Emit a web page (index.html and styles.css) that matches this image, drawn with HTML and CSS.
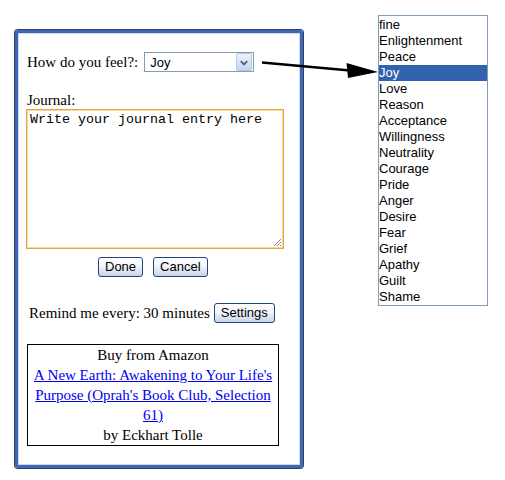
FILE: index.html
```html
<!DOCTYPE html>
<html>
<head>
<meta charset="utf-8">
<link rel="stylesheet" href="styles.css">
</head>
<body>
<div class="stage">
  <div class="frame">
    <div class="feel-row">
      <span class="label">How do you feel?:</span>
      <div class="select">
        <span class="select-value">Joy</span>
        <span class="drop">
          <svg width="15" height="17" viewBox="0 0 15 17"><path d="M4 7 L7.5 10.5 L11 7" fill="none" stroke="#4d6185" stroke-width="2"/></svg>
        </span>
      </div>
    </div>
    <div class="journal-label">Journal:</div>
    <div class="textarea">Write your journal entry here<svg class="grip" width="11" height="11" viewBox="0 0 11 11"><path d="M10 3 L3 10 M10 6 L6 10 M10 9 L9 10" stroke="#888" stroke-width="1"/></svg></div>
    <div class="actions">
      <button class="btn">Done</button>
      <button class="btn">Cancel</button>
    </div>
    <div class="remind-row">
      <span>Remind me every: 30 minutes</span>
      <button class="btn">Settings</button>
    </div>
    <div class="amazon">
      <div>Buy from Amazon</div>
      <a href="#" class="book-link">A New Earth: Awakening to Your Life's Purpose (Oprah's Book Club, Selection 61)</a>
      <div>by Eckhart Tolle</div>
    </div>
  </div>
  <ul class="listbox">
    <li>fine</li>
    <li>Enlightenment</li>
    <li>Peace</li>
    <li class="selected">Joy</li>
    <li>Love</li>
    <li>Reason</li>
    <li>Acceptance</li>
    <li>Willingness</li>
    <li>Neutrality</li>
    <li>Courage</li>
    <li>Pride</li>
    <li>Anger</li>
    <li>Desire</li>
    <li>Fear</li>
    <li>Grief</li>
    <li>Apathy</li>
    <li>Guilt</li>
    <li>Shame</li>
  </ul>
  <svg class="arrow" width="505" height="480" viewBox="0 0 505 480">
    <line x1="262" y1="62.5" x2="350" y2="70.5" stroke="#000" stroke-width="2.7"/>
    <polygon points="346.5,63 378,72 348,78" fill="#000"/>
  </svg>
</div>
</body>
</html>
```

FILE: styles.css
```css
html, body {
  margin: 0;
  padding: 0;
  background: #ffffff;
}

.stage {
  position: relative;
  width: 505px;
  height: 480px;
  box-sizing: border-box;
  padding: 15px 0 0 15px;
  display: flex;
  align-items: flex-start;
  font-family: "Liberation Serif", "Times New Roman", serif;
  font-size: 15px;
  color: #000;
}

.frame {
  box-sizing: border-box;
  width: 288px;
  height: 438px;
  margin-top: 15px;
  border: 3px solid #3b68be;
  border-radius: 3px;
  box-shadow: 0 0 0 1px #3a3f4a, inset 0 0 0 1px #d3d9e4;
  padding: 19px 0 0 8px;
  display: flex;
  flex-direction: column;
  align-items: flex-start;
}

.feel-row {
  display: flex;
  align-items: center;
  height: 20px;
  padding-left: 1px;
  gap: 6px;
  line-height: 17px;
}

.select {
  box-sizing: border-box;
  width: 110px;
  height: 20px;
  border: 1px solid #7f9db9;
  display: flex;
  align-items: center;
  justify-content: space-between;
  padding: 0 1px 0 5px;
  font-family: "Liberation Sans", Arial, sans-serif;
  font-size: 13px;
  background: #fff;
}

.drop {
  box-sizing: border-box;
  width: 16px;
  height: 18px;
  border: 1px solid #b4c6e6;
  border-radius: 2px;
  background: linear-gradient(#eef3fc, #c3d3f0);
  display: flex;
  align-items: center;
  justify-content: center;
}

.journal-label {
  margin-top: 20px;
  line-height: 17px;
  padding-left: 1px;
}

.textarea {
  position: relative;
  box-sizing: border-box;
  width: 258px;
  height: 140px;
  border: 1px solid #e0a843;
  box-shadow: inset 0 0 0 1px #f4d89c;
  padding: 2px 3px;
  font-family: "Liberation Mono", "Courier New", monospace;
  font-size: 13.33px;
  line-height: 15px;
  background: #fff;
}

.grip {
  position: absolute;
  right: 1px;
  bottom: 1px;
}

.actions {
  display: flex;
  gap: 10px;
  margin-top: 8px;
  padding-left: 72px;
}

.btn {
  box-sizing: border-box;
  height: 20px;
  margin: 0;
  padding: 0 6px;
  border: 1px solid #22457f;
  border-radius: 3px;
  background: linear-gradient(#ffffff 0%, #f2f5fa 45%, #c7d3e6 100%);
  font-family: "Liberation Sans", Arial, sans-serif;
  font-size: 13px;
  line-height: 18px;
  color: #000;
}

.remind-row {
  display: flex;
  align-items: center;
  gap: 4px;
  margin-top: 26px;
  padding-left: 3px;
  height: 20px;
}

.amazon {
  box-sizing: border-box;
  width: 252px;
  margin-top: 21px;
  margin-left: 1px;
  border: 1px solid #000;
  padding: 0 2px;
  text-align: center;
  line-height: 20px;
}

.book-link {
  color: #0000ee;
  text-decoration: underline;
  display: block;
}

.listbox {
  list-style: none;
  margin: 0 0 0 75px;
  padding: 1px 0 0 0;
  box-sizing: border-box;
  width: 110px;
  border: 1px solid #7f9db9;
  font-family: "Liberation Sans", Arial, sans-serif;
  font-size: 13px;
}

.listbox li {
  height: 16px;
  line-height: 16px;
  padding-left: 0;
  white-space: nowrap;
}

.listbox li.selected {
  background: #3162ab;
  color: #fff;
}

.arrow {
  position: absolute;
  left: 0;
  top: 0;
  pointer-events: none;
}
```
